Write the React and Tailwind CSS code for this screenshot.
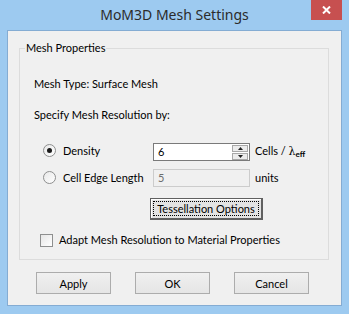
const font = "font-['Lato','Segoe_UI',sans-serif]";

const Radio = ({ checked }) => (
  <span className="flex h-[13px] w-[13px] items-center justify-center rounded-full border border-[#8e8f8f] bg-gradient-to-br from-[#e8e8e8] to-white">
    {checked && <span className="h-[5px] w-[5px] rounded-full bg-[#1a1a1a]" />}
  </span>
);

const PushButton = ({ children }) => (
  <button className="flex h-[22px] w-[75px] items-center justify-center border border-[#acacac] bg-gradient-to-b from-[#f0f0f0] to-[#e5e5e5] text-[11px] leading-none text-black">
    {children}
  </button>
);

const App = () => {
  return (
    <div className={`flex h-[314px] w-[349px] flex-col bg-[#9dcaf0] text-[11px] text-black whitespace-nowrap ${font}`}>
      {/* title bar */}
      <div className="flex h-[30px] shrink-0">
        <div className="w-[38px]" />
        <div className="flex flex-1 items-center justify-center pb-[1px] font-['Noto_Sans',sans-serif] text-[14px] text-[#2b2b2b]">
          MoM3D Mesh Settings
        </div>
        <div className="mr-[7px] flex h-[20px] w-[31px] items-center justify-center bg-[#c75050]">
          <svg width="9" height="8" viewBox="0 0 9 8">
            <path d="M1 0.5 L8 7.5 M8 0.5 L1 7.5" stroke="white" strokeWidth="2" />
          </svg>
        </div>
      </div>

      {/* client */}
      <div className="mx-[7px] mb-[8px] flex flex-1 flex-col border border-[#84acd3] bg-[#f0f0f0]">
        <div className="ml-[11px] mt-[17px] flex h-[212px] w-[310px] flex-col border border-[#dcdcdc]">
          <div className="ml-[5px] -mt-[9px] w-fit bg-[#f0f0f0] px-[1px] leading-[16px]">Mesh Properties</div>

          <div className="ml-[14px] mt-[20px] leading-[16px]">Mesh Type: Surface Mesh</div>
          <div className="ml-[14px] mt-[15px] leading-[16px]">Specify Mesh Resolution by:</div>

          {/* density row */}
          <div className="mt-[20px] flex h-[18px] items-center">
            <div className="ml-[23px] -mt-[3px]">
              <Radio checked />
            </div>
            <span className="ml-[7px] w-[90px] -mt-[2px]">Density</span>
            <div className="flex h-[18px] w-[97px] border border-[#7a7a7a] bg-white">
              <span className="flex-1 pl-[4px] leading-[16px]">6</span>
              <div className="flex w-[17px] flex-col justify-center gap-[1px] pr-[1px]">
                <div className="flex h-[7px] items-center justify-center border border-[#a8a8a8] bg-[#ececec]">
                  <svg width="5" height="3" viewBox="0 0 5 3"><path d="M2.5 0 L5 3 L0 3 Z" fill="#222" /></svg>
                </div>
                <div className="flex h-[7px] items-center justify-center border border-[#a8a8a8] bg-[#ececec]">
                  <svg width="5" height="3" viewBox="0 0 5 3"><path d="M0 0 L5 0 L2.5 3 Z" fill="#222" /></svg>
                </div>
              </div>
            </div>
            <span className="ml-[5px]">
              Cells / <span className="font-['DejaVu_Serif',serif]">λ</span>
              <sub className="text-[8px] font-bold">eff</sub>
            </span>
          </div>

          {/* cell edge row */}
          <div className="mt-[8px] flex h-[18px] items-center">
            <div className="ml-[23px] -mt-[1px]">
              <Radio />
            </div>
            <span className="ml-[7px] w-[90px]">Cell Edge Length</span>
            <div className="flex h-[18px] w-[97px] items-center border border-[#cccccc] bg-[#f0f0f0] pl-[4px] leading-[16px] text-[#6d6d6d]">
              5
            </div>
            <span className="ml-[5px]">units</span>
          </div>

          {/* tessellation button */}
          <div className="mt-[11px] flex">
            <button className="ml-[130px] flex h-[22px] w-[113px] border border-b-2 border-r-2 border-[#606060] bg-[#e3e3e3] p-[2px] text-[11px] shadow-[inset_1px_1px_0_#ffffff]">
              <span className="flex flex-1 items-center justify-center border border-dotted border-black leading-none">
                Tessellation Options
              </span>
            </button>
          </div>

          {/* checkbox */}
          <div className="mt-[12px] flex h-[16px] items-center">
            <span className="ml-[20px] h-[13px] w-[13px] border border-[#8e8f8f] bg-gradient-to-br from-[#e6e6e6] to-white" />
            <span className="ml-[6px]">Adapt Mesh Resolution to Material Properties</span>
          </div>
        </div>

        <div className="ml-[28px] mt-[12px] flex gap-[24px]">
          <PushButton>Apply</PushButton>
          <PushButton>OK</PushButton>
          <PushButton>Cancel</PushButton>
        </div>
      </div>
    </div>
  );
};

export default App;
